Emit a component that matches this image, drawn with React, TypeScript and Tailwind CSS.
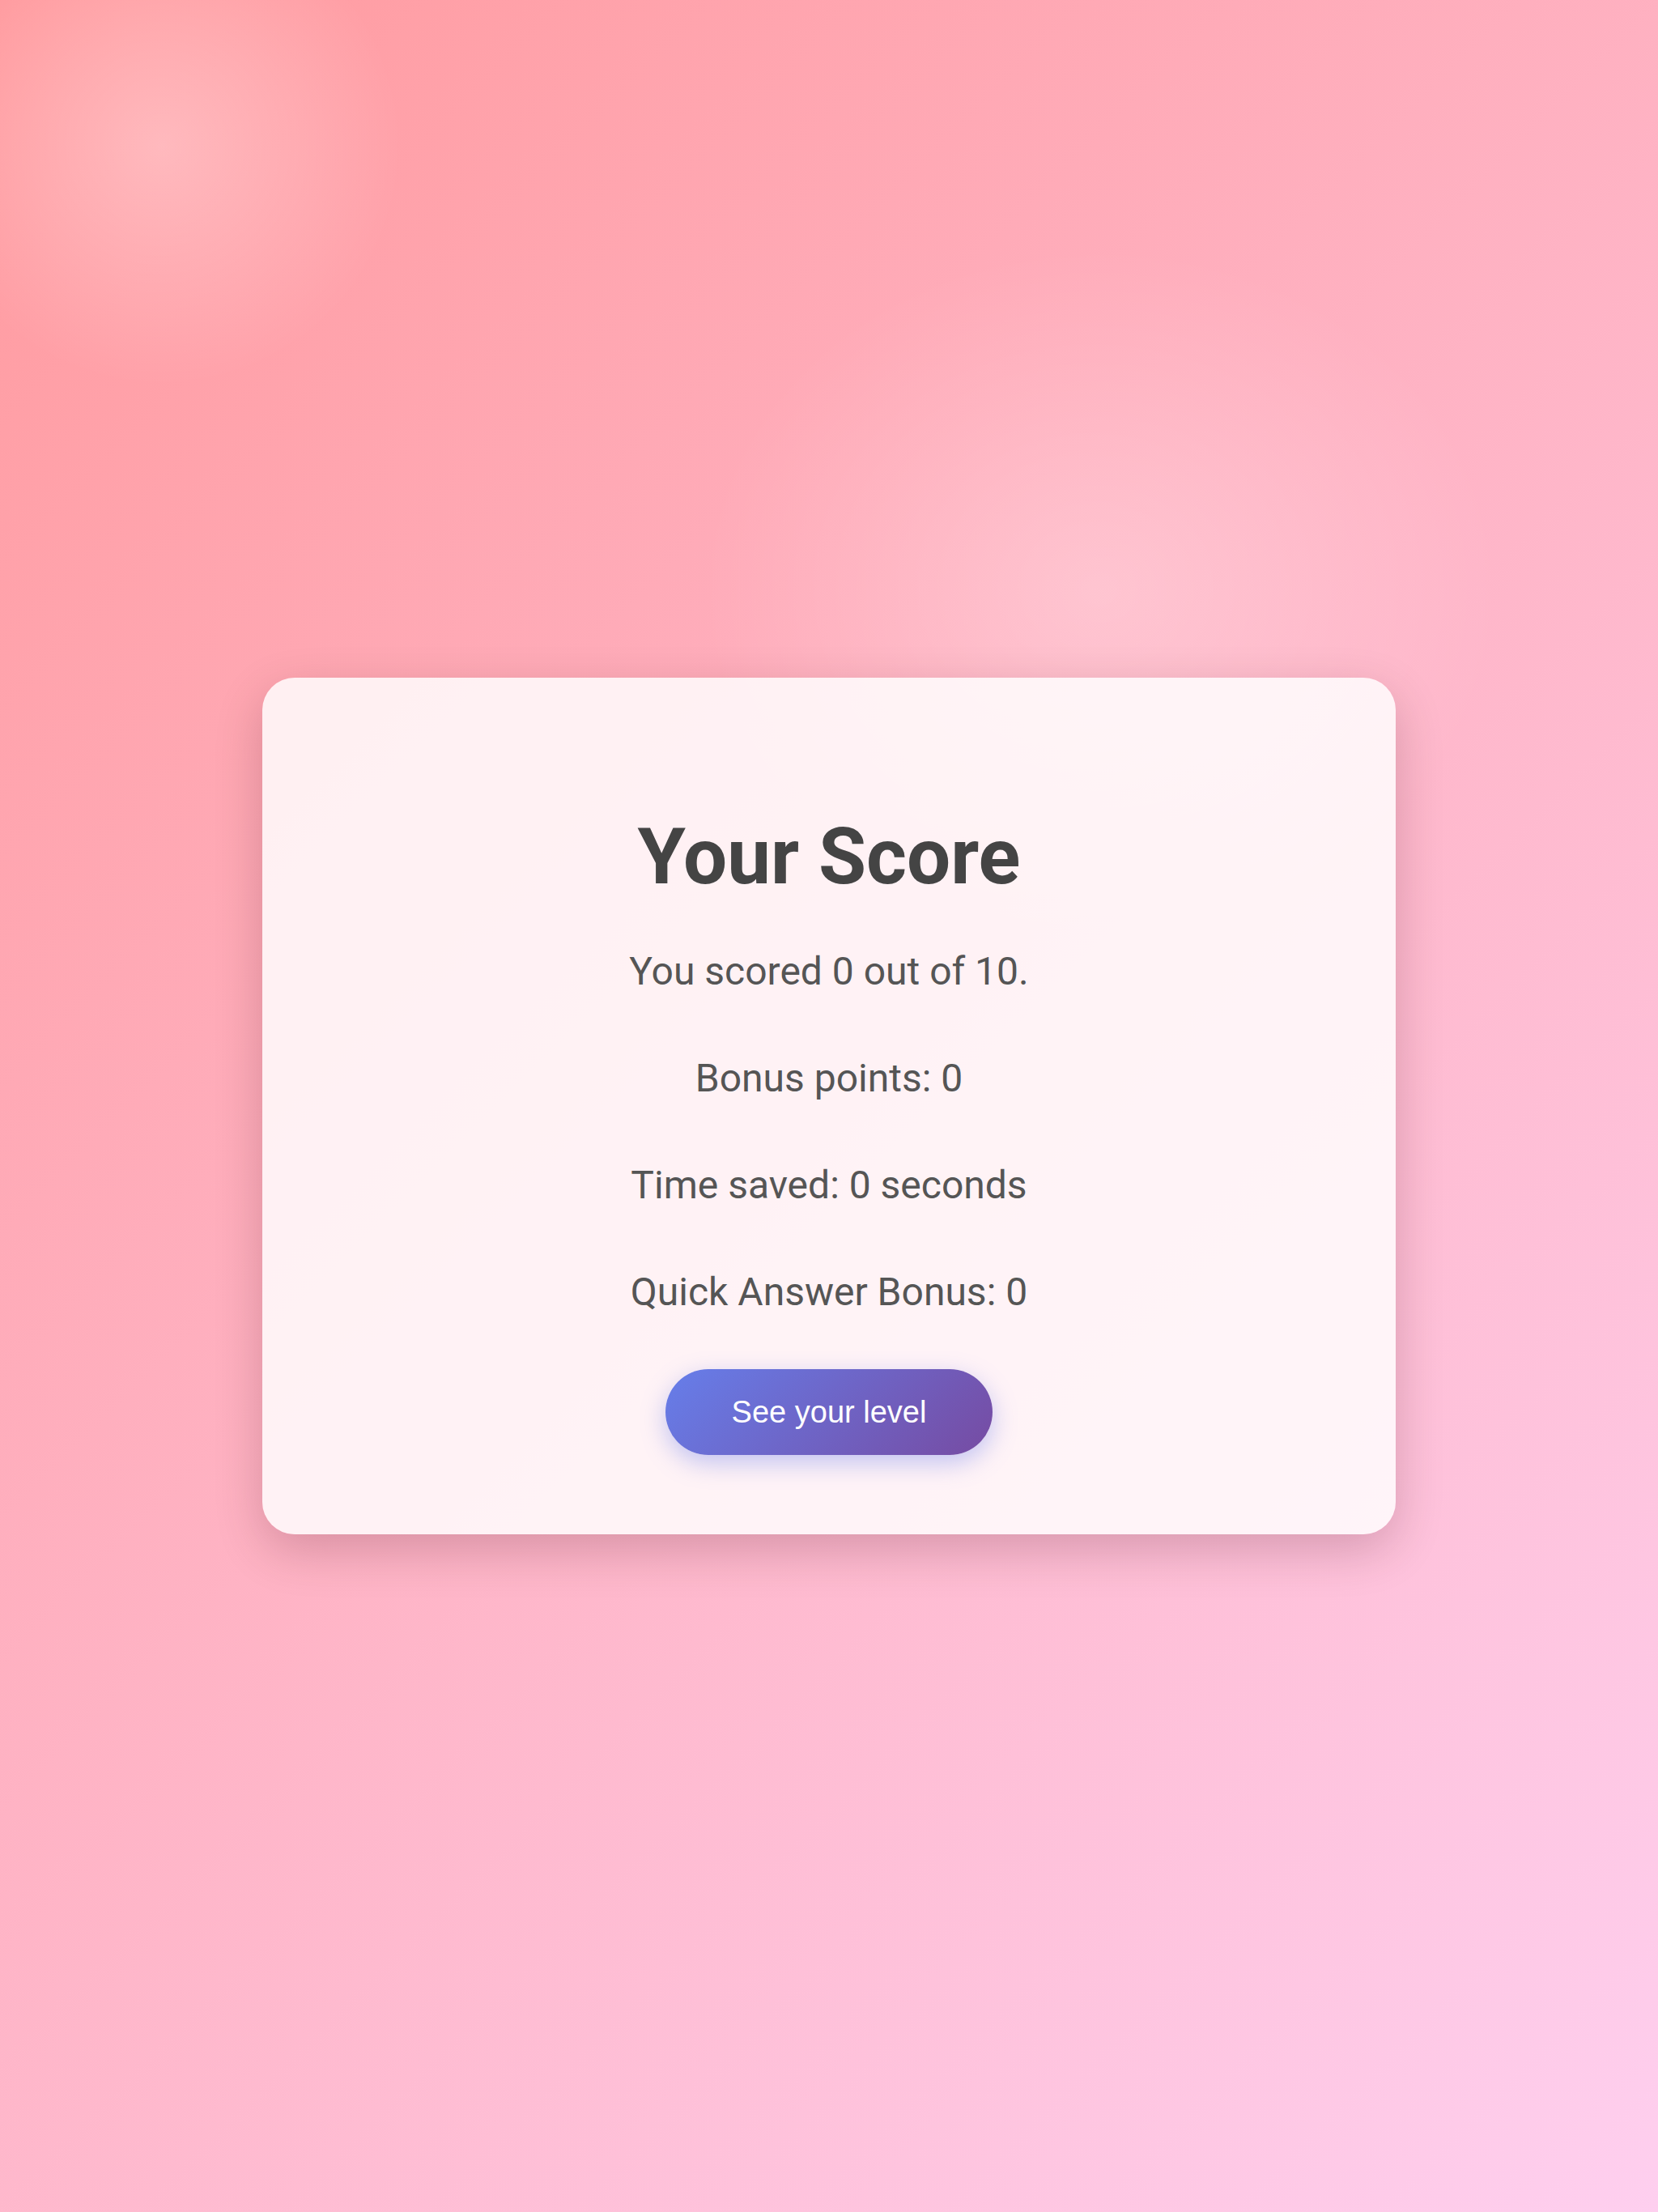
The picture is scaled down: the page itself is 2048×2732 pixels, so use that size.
import React from "react";

export default function App() {
  return (
    <div className="relative flex min-h-[2732px] w-full items-center justify-center overflow-hidden bg-[linear-gradient(135deg,#ff9a9e_0%,#fecfef_100%)] font-['Roboto',sans-serif]">
      <div className="pointer-events-none absolute left-[-100px] top-[-120px] h-[600px] w-[600px] rounded-full bg-[radial-gradient(circle,rgba(255,255,255,0.28)_0%,rgba(255,255,255,0.12)_40%,rgba(255,255,255,0)_70%)]" />
      <div className="pointer-events-none absolute left-[860px] top-[300px] h-[860px] w-[1000px] rounded-full bg-[radial-gradient(ellipse,rgba(255,255,255,0.25)_0%,rgba(255,255,255,0.1)_40%,rgba(255,255,255,0)_70%)]" />
      <div className="relative flex w-[1400px] flex-col items-center rounded-[40px] bg-white/[0.83] pb-[98px] pt-[165px] text-center shadow-[0_20px_60px_rgba(60,0,20,0.2)]">
        <h1 className="m-0 text-[96px] font-bold leading-[112px] text-[#444444]">Your Score</h1>
        <div className="mt-[44px] flex flex-col gap-[48px] text-[48px] leading-[84px] text-[#555555]">
          <p className="m-0">You scored 0 out of 10.</p>
          <p className="m-0">Bonus points: 0</p>
          <p className="m-0">Time saved: 0 seconds</p>
          <p className="m-0">Quick Answer Bonus: 0</p>
        </div>
        <button className="mt-[53px] flex h-[106px] items-center justify-center rounded-full bg-[linear-gradient(135deg,#667eea_0%,#764ba2_100%)] px-[82px] font-['Liberation_Sans',Arial,sans-serif] text-[38px] text-white shadow-[0_10px_30px_rgba(102,126,234,0.4)]">
          See your level
        </button>
      </div>
    </div>
  );
}
